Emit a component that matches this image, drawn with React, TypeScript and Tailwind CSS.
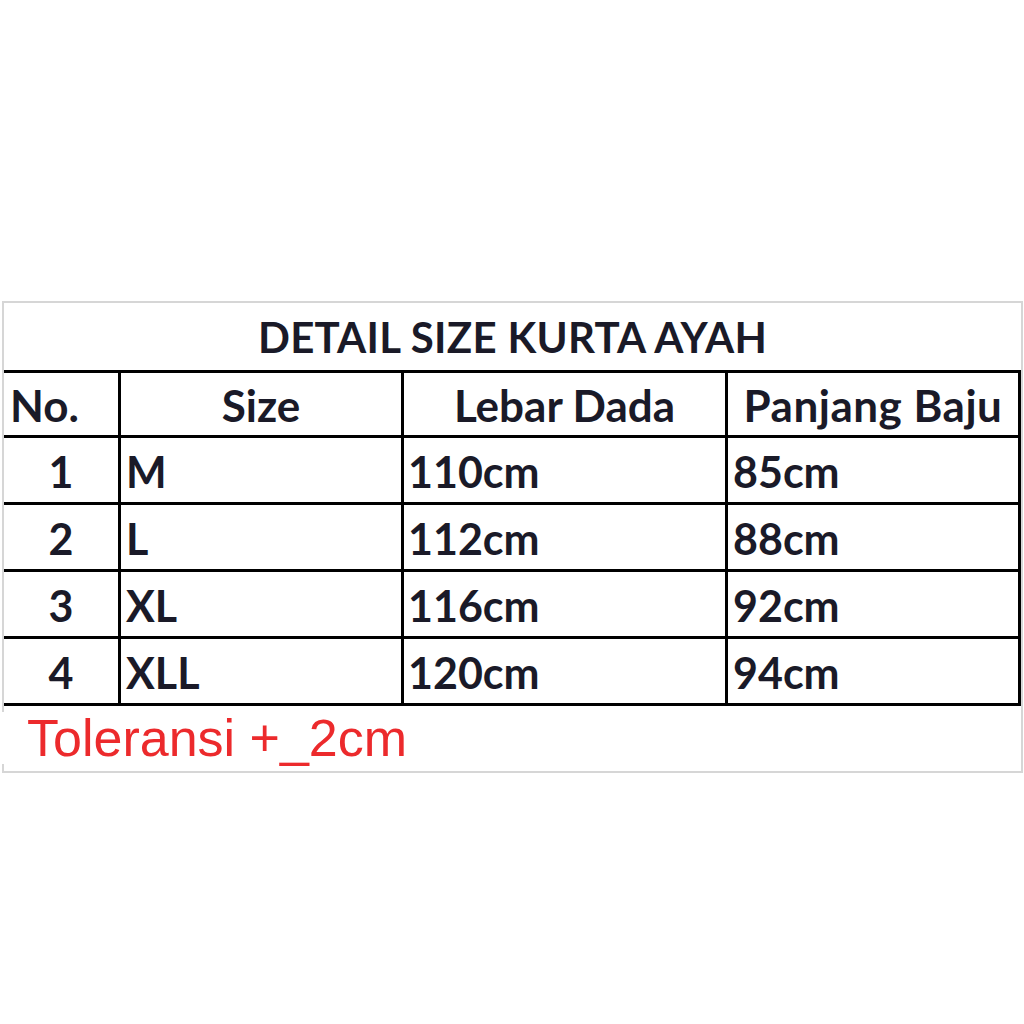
const rows = [
  { no: "1", size: "M", dada: "110cm", baju: "85cm" },
  { no: "2", size: "L", dada: "112cm", baju: "88cm" },
  { no: "3", size: "XL", dada: "116cm", baju: "92cm" },
  { no: "4", size: "XLL", dada: "120cm", baju: "94cm" },
]

const head = "flex h-[65px] border-b-[3px] border-black pt-[10px] text-[44px] font-bold leading-none"
const data = "flex h-[67px] border-b-[3px] border-black pt-[12px] text-[43px] font-bold leading-none"

export default function App() {
  return (
    <div className="w-[1024px] h-[1024px] bg-white pt-[301px] font-['Lato',sans-serif] text-[#1a1a28]">
      <div className="ml-[2px] w-[1021px] border-2 border-[#d6d6d6] bg-white">
        <div className="h-[67px] flex items-end justify-center pb-[12px] text-[42px] font-bold leading-none tracking-[0.3px]">
          DETAIL SIZE KURTA AYAH
        </div>

        <div className="grid grid-cols-[114px_283px_324px_1fr] border-t-[3px] border-r-[3px] border-black">
          <div className={`${head} pl-[6px]`}>No.</div>
          <div className={`${head} justify-center border-l-[3px]`}>Size</div>
          <div className={`${head} justify-center border-l-[3px]`}>Lebar Dada</div>
          <div className={`${head} justify-center border-l-[3px] tracking-[0.5px]`}>Panjang Baju</div>

          {rows.map((r) => (
            <div key={r.no} className="contents">
              <div className={`${data} justify-center`}>{r.no}</div>
              <div className={`${data} border-l-[3px] pl-[5px]`}>{r.size}</div>
              <div className={`${data} border-l-[3px] pl-[4px]`}>{r.dada}</div>
              <div className={`${data} border-l-[3px] pl-[5px]`}>{r.baju}</div>
            </div>
          ))}
        </div>

        <div className="h-[65px] pt-[6px]">
          <div className="-ml-[4px] w-fit bg-white pl-[27px] pr-[20px] font-['Liberation_Sans',Arial,sans-serif] text-[52px] leading-none text-[#ec2a2c]">
            Toleransi +_2cm
          </div>
        </div>
      </div>
    </div>
  )
}
